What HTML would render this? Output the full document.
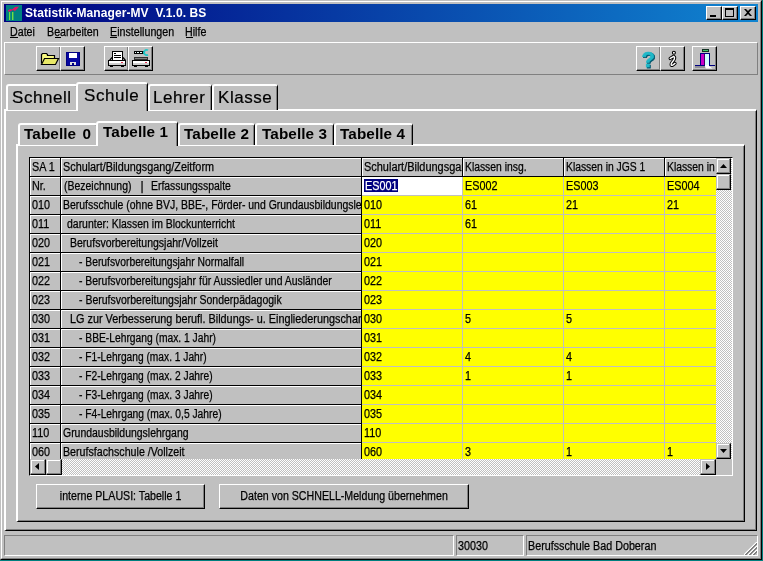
<!DOCTYPE html>
<html>
<head>
<meta charset="utf-8">
<title>Statistik-Manager-MV</title>
<style>
*{box-sizing:border-box;margin:0;padding:0}
html,body{width:763px;height:561px;overflow:hidden;background:#008080}
body{font-family:"Liberation Sans",sans-serif;font-size:11px;color:#000;position:relative;-webkit-font-smoothing:antialiased}
#root{position:absolute;left:0;top:0;width:763px;height:561px;will-change:transform}
.abs{position:absolute}
#win{position:absolute;left:0;top:0;width:762px;height:560px;background:#c0c0c0;
 border:1px solid;border-color:#c0c0c0 #000 #000 #c0c0c0}
#win2{position:absolute;left:0;top:0;width:760px;height:558px;border:1px solid;border-color:#fff #808080 #808080 #fff}
#title{position:absolute;left:4px;top:4px;width:754px;height:18px;
 background:linear-gradient(to right,#000080 0%,#1084d0 100%)}
#title .txt{position:absolute;left:21px;top:1px;color:#fff;font-weight:bold;font-size:12px;line-height:16px;white-space:pre;letter-spacing:0.08px}
.cap{position:absolute;top:2px;width:16px;height:14px;background:#c0c0c0;
 border:1px solid;border-color:#fff #000 #000 #fff;box-shadow:inset -1px -1px 0 #808080}
.menu{position:absolute;top:25px;font-size:11px;line-height:14px;white-space:pre;}
.menu u{text-decoration:none}
.ul{position:absolute;top:37px;height:1px;background:#000}
.menu .t{transform:scaleX(.89)}
#tb{position:absolute;left:4px;top:42px;width:754px;height:33px;border:1px solid;border-color:#fff #808080 #808080 #fff}
.tbtn{position:absolute;top:46px;width:25px;height:25px;background:#c0c0c0;
 border:1px solid;border-color:#fff #000 #000 #fff;box-shadow:inset -1px -1px 0 #808080}
.tab{position:absolute;background:#c0c0c0;border-style:solid;border-width:2px 1px 0 2px;border-color:#fff #000 transparent #fff;
 border-radius:3px 3px 0 0;box-shadow:inset -1px 0 0 #808080;white-space:pre}
.tab1{-webkit-text-stroke:0.2px #000;font-size:17px;line-height:20px;letter-spacing:0.55px}
.on{}
.tab2{font-size:14px;font-weight:bold;line-height:16px}
.tab2 span{transform:scaleX(1.09);transform-origin:0 50%;letter-spacing:0.1px}
.panel{position:absolute;background:#c0c0c0;border-style:solid;border-width:2px 1px 1px 2px;border-color:#fff #000 #000 #fff;
 box-shadow:inset -1px -1px 0 #808080}
#grid{position:absolute;left:29px;top:157px;width:704px;height:319px;background:#c0c0c0;overflow:hidden;
 border:1px solid;border-color:#000 #fff #fff #000}
.row{position:absolute;left:0;height:19px;width:686px}
.c{position:absolute;top:0;height:19px;line-height:18px;white-space:pre;overflow:hidden;font-size:11px}
.f{background:#c0c0c0;border-right:1px solid #000;border-bottom:1px solid #000;box-shadow:inset 1px 1px 0 #fff;padding-left:2.5px}
.y{background:#ff0;border-right:1px solid #c0c0c0;border-bottom:1px solid #c0c0c0;padding-left:1.5px;line-height:18px}
.btn{position:absolute;background:#c0c0c0;border:1px solid;border-color:#fff #000 #000 #fff;
 box-shadow:inset -1px -1px 0 #808080;text-align:center;font-size:11px;line-height:21px;padding-top:1px;white-space:pre}
.btn .t{transform:scaleX(.886)}
.sb{position:absolute;border:1px solid;border-color:#808080 #fff #fff #808080;font-size:11px;line-height:18px;padding:1px 0 0 1px;white-space:pre}
.sb .t{transform:scaleX(.895)}
.dither{background-image:conic-gradient(#fff 25%,#c0c0c0 0 50%,#fff 0 75%,#c0c0c0 0);background-size:2px 2px}
.sbtn{position:absolute;background:#c0c0c0;border:1px solid;border-color:#c0c0c0 #000 #000 #c0c0c0;
 box-shadow:inset -1px -1px 0 #808080, inset 1px 1px 0 #fff}
.sel{background:#000080;color:#fff;position:absolute;left:2px;top:2px;width:34px;height:13px;line-height:14px;padding:0 1px;overflow:hidden}
.sel .t{position:absolute;left:1px;top:0;line-height:14px}
.t{-webkit-text-stroke:0.25px currentColor;display:inline-block;transform:scaleX(.87);transform-origin:0 50%;font-size:12px;white-space:pre}
.tc{transform-origin:50% 50%}
.p{position:absolute;top:0}
</style>
</head>
<body><div id="root">
<div id="win"><div id="win2"></div></div>

<!-- title bar -->
<div id="title">
 <svg class="abs" style="left:2px;top:1px" width="16" height="16" viewBox="0 0 16 16">
  <rect width="16" height="16" fill="#008080"/>
  <path d="M2 5.5L4 4L6 4.5L9 2L13 1.5L11 4L9 6L7 5L4 6.5L2 6.5Z" fill="#e0106a"/>
  <rect x="3" y="7" width="1.2" height="8" fill="#70e040"/>
  <rect x="6" y="7" width="1.4" height="8" fill="#70e040"/>
 </svg>
 <div class="txt">Statistik-Manager-MV  V.1.0. BS</div>
 <div class="cap" style="left:702px"><div class="abs" style="left:3px;top:8px;width:6px;height:2px;background:#000"></div></div>
 <div class="cap" style="left:718px"><div class="abs" style="left:2px;top:1px;width:9px;height:9px;border:1px solid #000;border-top-width:2px"></div></div>
 <div class="cap" style="left:736px"><svg class="abs" style="left:3px;top:2px" width="8" height="7" viewBox="0 0 8 7"><path d="M0 0h2l2 2 2-2h2l-3 3.5 3 3.5h-2l-2-2-2 2h-2l3-3.5z" fill="#000"/></svg></div>
</div>

<!-- menu -->
<div class="menu" style="left:10px"><span class="t"><u>D</u>atei</span></div>
<div class="menu" style="left:47px"><span class="t">B<u>e</u>arbeiten</span></div>
<div class="menu" style="left:110px"><span class="t"><u>E</u>instellungen</span></div>
<div class="menu" style="left:185px"><span class="t"><u>H</u>ilfe</span></div>

<div class="ul" style="left:10px;width:8px"></div><div class="ul" style="left:55px;width:6px"></div><div class="ul" style="left:110px;width:7px"></div><div class="ul" style="left:186px;width:7px"></div>

<!-- toolbar -->
<div id="tb"></div>
<div class="tbtn" style="left:36px"></div>
<div class="tbtn" style="left:60px"></div>
<div class="tbtn" style="left:104px"></div>
<div class="tbtn" style="left:128px"></div>
<div class="tbtn" style="left:636px"></div>
<div class="tbtn" style="left:660px"></div>
<div class="tbtn" style="left:692px"></div>


<!-- toolbar icons -->
<svg class="abs" style="left:0;top:40px" width="763" height="36" viewBox="0 40 763 36">
 <!-- folder -->
 <g stroke="#000" stroke-width="1.2" stroke-linejoin="miter">
  <path d="M41.5 63.5V54.5L42.5 53.5H46.5L47.5 54.5V55.5H54.5V58" fill="#f8f880"/>
  <path d="M41.5 64.5L44.5 58.5H58.5L55.5 64.5Z" fill="#e8e868"/>
 </g>
 <!-- floppy -->
 <g shape-rendering="crispEdges">
  <rect x="66" y="52" width="14" height="14" rx="1" fill="#000080"/>
  <rect x="67" y="53" width="12" height="12" fill="#0808a0"/>
  <rect x="69" y="53" width="8" height="5" fill="#fff"/>
  <rect x="70" y="62" width="6" height="3" fill="#e0e0e0"/>
  <rect x="72" y="63" width="2" height="2" fill="#000080"/>
 </g>
 <!-- printer 1 -->
 <g shape-rendering="crispEdges">
  <rect x="112" y="51" width="11" height="9" fill="#000"/>
  <rect x="113" y="52" width="9" height="8" fill="#fff"/>
  <rect x="114" y="53" width="2" height="1" fill="#000"/>
  <rect x="114" y="55" width="7" height="1" fill="#000"/>
  <rect x="114" y="57" width="7" height="1" fill="#000"/>
  <rect x="108" y="60" width="18" height="6" fill="#000"/>
  <rect x="109" y="61" width="16" height="2" fill="#fff"/>
  <rect x="109" y="63" width="16" height="2" fill="#d0d0d0"/>
  <rect x="121" y="62" width="2" height="1" fill="#e03050"/>
  <rect x="110" y="66" width="3" height="1" fill="#000"/><rect x="121" y="66" width="3" height="1" fill="#000"/>
 </g>
 <path d="M112 57.5L109.5 60.5M123 57.5L125.5 60.5" stroke="#000" stroke-width="1.2"/>
 <!-- printer 2 with wrench -->
 <g shape-rendering="crispEdges">
  <rect x="134" y="51" width="11" height="3" fill="#000"/>
  <rect x="135" y="52" width="9" height="1" fill="#e8ffff"/>
  <rect x="136" y="52" width="1" height="1" fill="#000"/><rect x="139" y="52" width="1" height="1" fill="#000"/><rect x="142" y="52" width="1" height="1" fill="#000"/>
  <rect x="134" y="57" width="14" height="3" fill="#303030"/>
  <rect x="135" y="58" width="12" height="1" fill="#808080"/>
  <rect x="132" y="60" width="18" height="6" fill="#000"/>
  <rect x="133" y="61" width="16" height="2" fill="#fff"/>
  <rect x="133" y="63" width="16" height="2" fill="#d0d0d0"/>
  <rect x="145" y="62" width="2" height="1" fill="#e03050"/>
  <rect x="134" y="66" width="3" height="1" fill="#000"/><rect x="145" y="66" width="3" height="1" fill="#000"/>
 </g>
 <path d="M148 50.3A2.6 2.6 0 1 0 148 54.7" fill="none" stroke="#20c8c8" stroke-width="1.8"/>
 <!-- question mark -->
 <g font-family="Liberation Sans, sans-serif" font-weight="bold" font-size="22">
  <text x="642.6" y="68.2" fill="#005870" stroke="#005870" stroke-width=".8">?</text>
  <text x="641.6" y="67.2" fill="#20b8c8" stroke="#20b8c8" stroke-width=".6">?</text>
 </g>
 <!-- info i -->
 <g fill="none" stroke-linecap="round" stroke-linejoin="round">
  <path id="ip" d="M670.2 58.4L673.8 56.3C675.6 57.6 674 60 672.3 62C670.4 64.4 671 65.9 672.6 65.2L675 63.4" stroke="#000" stroke-width="3.3"/>
  <path d="M670.2 58.4L673.8 56.3C675.6 57.6 674 60 672.3 62C670.4 64.4 671 65.9 672.6 65.2L675 63.4" stroke="#fff" stroke-width="1.4"/>
  <circle cx="673.9" cy="52.8" r="1.5" fill="#fff" stroke="#000" stroke-width="1.1"/>
 </g>
 <!-- door -->
 <g shape-rendering="crispEdges">
  <rect x="702" y="49" width="7" height="3" fill="#103020"/>
  <rect x="703" y="50" width="5" height="1" fill="#40c868"/>
  <rect x="700" y="53" width="10" height="13" fill="#000080"/>
  <rect x="701" y="54" width="3" height="11" fill="#c800c8"/>
  <rect x="704" y="54" width="1" height="11" fill="#400060"/>
  <rect x="705" y="54" width="4" height="12" fill="#d0ffff"/>
  <rect x="695" y="65" width="20" height="1" fill="#000080"/>
  <rect x="695" y="66" width="10" height="2" fill="#909098"/>
  <rect x="705" y="65" width="4" height="1" fill="#fff"/>
 </g>
 <path d="M705 66H709L712.5 68.5H706Z" fill="#fff"/>
</svg>

<!-- outer tab panel -->
<div class="panel" style="left:4px;top:109px;width:753px;height:422px"></div>
<div class="tab tab1" style="left:6px;top:84px;width:72px;height:26px"><span class="abs" style="left:4px;top:2px">Schnell</span></div>
<div class="tab tab1" style="left:148px;top:84px;width:64px;height:26px"><span class="abs" style="left:3px;top:2px">Lehrer</span></div>
<div class="tab tab1" style="left:212px;top:84px;width:66px;height:26px"><span class="abs" style="left:4px;top:2px">Klasse</span></div>
<div class="tab tab1 on" style="left:76px;top:82px;width:72px;height:29px"><span class="abs" style="left:6px;top:2px">Schule</span></div>

<!-- inner tab panel -->
<div class="panel" style="left:16px;top:144px;width:729px;height:378px"></div>
<div class="tab tab2" style="left:18px;top:123px;width:80px;height:22px"><span class="abs" style="left:4px;top:1px">Tabelle<i style="display:inline-block;width:5.7px"></i>0</span></div>
<div class="tab tab2" style="left:178px;top:123px;width:77px;height:22px"><span class="abs" style="left:4px;top:1px">Tabelle 2</span></div>
<div class="tab tab2" style="left:255px;top:123px;width:79px;height:22px"><span class="abs" style="left:5px;top:1px">Tabelle 3</span></div>
<div class="tab tab2" style="left:334px;top:123px;width:79px;height:22px"><span class="abs" style="left:4px;top:1px">Tabelle 4</span></div>
<div class="tab tab2 on" style="left:96px;top:121px;width:82px;height:25px"><span class="abs" style="left:5px;top:1px">Tabelle 1</span></div>

<!-- grid -->
<div id="grid">
<div class="row" style="top:0px">
<div class="c f" style="left:0px;width:31px;padding-left:1.8px"><span class="t" style="transform:scaleX(.9)">SA 1</span></div>
<div class="c f" style="left:31px;width:301px"><span class="t p" style="left:2.0px;transform:scaleX(0.902)">Schulart/Bildungsgang/Zeitform</span></div>
<div class="c f" style="left:332px;width:101px;padding-left:1.5px"><span class="t" style="transform:scaleX(0.912)">Schulart/Bildungsgang/Zeitform</span></div>
<div class="c f" style="left:433px;width:101px;padding-left:1.5px"><span class="t" style="transform:scaleX(0.862)">Klassen insg.</span></div>
<div class="c f" style="left:534px;width:101px;padding-left:1.5px"><span class="t" style="transform:scaleX(0.862)">Klassen in JGS 1</span></div>
<div class="c f" style="left:635px;width:60px;padding-left:1.5px"><span class="t" style="transform:scaleX(0.862)">Klassen in JGS 2</span></div>
</div>
<div class="row" style="top:19px">
<div class="c f" style="left:0px;width:31px;padding-left:1.8px"><span class="t" style="transform:scaleX(.9)">Nr.</span></div>
<div class="c f" style="left:31px;width:301px"><span class="t p" style="left:2.5px;transform:scaleX(0.872)">(Bezeichnung)</span><span class="t p" style="left:79.5px;transform:scaleX(1.000)">|</span><span class="t p" style="left:89.5px;transform:scaleX(0.867)">Erfassungsspalte</span></div>
<div class="c y" style="left:332px;width:101px;background:#fff"><span class="sel"><span class="t" style="transform:scaleX(.9)">ES001</span></span></div>
<div class="c y" style="left:433px;width:101px"><span class="t" style="transform:scaleX(.9)">ES002</span></div>
<div class="c y" style="left:534px;width:101px"><span class="t" style="transform:scaleX(.9)">ES003</span></div>
<div class="c y" style="left:635px;width:60px"><span class="t" style="transform:scaleX(.9)">ES004</span></div>
</div>
<div class="row" style="top:38px">
<div class="c f" style="left:0px;width:31px;padding-left:1.8px"><span class="t" style="transform:scaleX(.9)">010</span></div>
<div class="c f" style="left:31px;width:301px"><span class="t p" style="left:2.0px;transform:scaleX(0.871)">Berufsschule (ohne BVJ, BBE-, Förder- und Grundausbildungslehrgang)</span></div>
<div class="c y" style="left:332px;width:101px"><span class="t" style="transform:scaleX(.9)">010</span></div>
<div class="c y" style="left:433px;width:101px"><span class="t" style="transform:scaleX(.9)">61</span></div>
<div class="c y" style="left:534px;width:101px"><span class="t" style="transform:scaleX(.9)">21</span></div>
<div class="c y" style="left:635px;width:60px"><span class="t" style="transform:scaleX(.9)">21</span></div>
</div>
<div class="row" style="top:57px">
<div class="c f" style="left:0px;width:31px;padding-left:1.8px"><span class="t" style="transform:scaleX(.9)">011</span></div>
<div class="c f" style="left:31px;width:301px"><span class="t p" style="left:5.5px;transform:scaleX(0.871)">darunter: Klassen im Blockunterricht</span></div>
<div class="c y" style="left:332px;width:101px"><span class="t" style="transform:scaleX(.9)">011</span></div>
<div class="c y" style="left:433px;width:101px"><span class="t" style="transform:scaleX(.9)">61</span></div>
<div class="c y" style="left:534px;width:101px"><span class="t" style="transform:scaleX(.9)"></span></div>
<div class="c y" style="left:635px;width:60px"><span class="t" style="transform:scaleX(.9)"></span></div>
</div>
<div class="row" style="top:76px">
<div class="c f" style="left:0px;width:31px;padding-left:1.8px"><span class="t" style="transform:scaleX(.9)">020</span></div>
<div class="c f" style="left:31px;width:301px"><span class="t p" style="left:8.5px;transform:scaleX(0.876)">Berufsvorbereitungsjahr/Vollzeit</span></div>
<div class="c y" style="left:332px;width:101px"><span class="t" style="transform:scaleX(.9)">020</span></div>
<div class="c y" style="left:433px;width:101px"><span class="t" style="transform:scaleX(.9)"></span></div>
<div class="c y" style="left:534px;width:101px"><span class="t" style="transform:scaleX(.9)"></span></div>
<div class="c y" style="left:635px;width:60px"><span class="t" style="transform:scaleX(.9)"></span></div>
</div>
<div class="row" style="top:95px">
<div class="c f" style="left:0px;width:31px;padding-left:1.8px"><span class="t" style="transform:scaleX(.9)">021</span></div>
<div class="c f" style="left:31px;width:301px"><span class="t p" style="left:17.5px;transform:scaleX(0.859)">- Berufsvorbereitungsjahr Normalfall</span></div>
<div class="c y" style="left:332px;width:101px"><span class="t" style="transform:scaleX(.9)">021</span></div>
<div class="c y" style="left:433px;width:101px"><span class="t" style="transform:scaleX(.9)"></span></div>
<div class="c y" style="left:534px;width:101px"><span class="t" style="transform:scaleX(.9)"></span></div>
<div class="c y" style="left:635px;width:60px"><span class="t" style="transform:scaleX(.9)"></span></div>
</div>
<div class="row" style="top:114px">
<div class="c f" style="left:0px;width:31px;padding-left:1.8px"><span class="t" style="transform:scaleX(.9)">022</span></div>
<div class="c f" style="left:31px;width:301px"><span class="t p" style="left:17.5px;transform:scaleX(0.869)">- Berufsvorbereitungsjahr für Aussiedler und Ausländer</span></div>
<div class="c y" style="left:332px;width:101px"><span class="t" style="transform:scaleX(.9)">022</span></div>
<div class="c y" style="left:433px;width:101px"><span class="t" style="transform:scaleX(.9)"></span></div>
<div class="c y" style="left:534px;width:101px"><span class="t" style="transform:scaleX(.9)"></span></div>
<div class="c y" style="left:635px;width:60px"><span class="t" style="transform:scaleX(.9)"></span></div>
</div>
<div class="row" style="top:133px">
<div class="c f" style="left:0px;width:31px;padding-left:1.8px"><span class="t" style="transform:scaleX(.9)">023</span></div>
<div class="c f" style="left:31px;width:301px"><span class="t p" style="left:17.5px;transform:scaleX(0.873)">- Berufsvorbereitungsjahr Sonderpädagogik</span></div>
<div class="c y" style="left:332px;width:101px"><span class="t" style="transform:scaleX(.9)">023</span></div>
<div class="c y" style="left:433px;width:101px"><span class="t" style="transform:scaleX(.9)"></span></div>
<div class="c y" style="left:534px;width:101px"><span class="t" style="transform:scaleX(.9)"></span></div>
<div class="c y" style="left:635px;width:60px"><span class="t" style="transform:scaleX(.9)"></span></div>
</div>
<div class="row" style="top:152px">
<div class="c f" style="left:0px;width:31px;padding-left:1.8px"><span class="t" style="transform:scaleX(.9)">030</span></div>
<div class="c f" style="left:31px;width:301px"><span class="t p" style="left:8.5px;transform:scaleX(0.903)">LG zur Verbesserung berufl. Bildungs- u. Eingliederungschancen</span></div>
<div class="c y" style="left:332px;width:101px"><span class="t" style="transform:scaleX(.9)">030</span></div>
<div class="c y" style="left:433px;width:101px"><span class="t" style="transform:scaleX(.9)">5</span></div>
<div class="c y" style="left:534px;width:101px"><span class="t" style="transform:scaleX(.9)">5</span></div>
<div class="c y" style="left:635px;width:60px"><span class="t" style="transform:scaleX(.9)"></span></div>
</div>
<div class="row" style="top:171px">
<div class="c f" style="left:0px;width:31px;padding-left:1.8px"><span class="t" style="transform:scaleX(.9)">031</span></div>
<div class="c f" style="left:31px;width:301px"><span class="t p" style="left:17.5px;transform:scaleX(0.856)">- BBE-Lehrgang (max. 1 Jahr)</span></div>
<div class="c y" style="left:332px;width:101px"><span class="t" style="transform:scaleX(.9)">031</span></div>
<div class="c y" style="left:433px;width:101px"><span class="t" style="transform:scaleX(.9)"></span></div>
<div class="c y" style="left:534px;width:101px"><span class="t" style="transform:scaleX(.9)"></span></div>
<div class="c y" style="left:635px;width:60px"><span class="t" style="transform:scaleX(.9)"></span></div>
</div>
<div class="row" style="top:190px">
<div class="c f" style="left:0px;width:31px;padding-left:1.8px"><span class="t" style="transform:scaleX(.9)">032</span></div>
<div class="c f" style="left:31px;width:301px"><span class="t p" style="left:17.5px;transform:scaleX(0.850)">- F1-Lehrgang (max. 1 Jahr)</span></div>
<div class="c y" style="left:332px;width:101px"><span class="t" style="transform:scaleX(.9)">032</span></div>
<div class="c y" style="left:433px;width:101px"><span class="t" style="transform:scaleX(.9)">4</span></div>
<div class="c y" style="left:534px;width:101px"><span class="t" style="transform:scaleX(.9)">4</span></div>
<div class="c y" style="left:635px;width:60px"><span class="t" style="transform:scaleX(.9)"></span></div>
</div>
<div class="row" style="top:209px">
<div class="c f" style="left:0px;width:31px;padding-left:1.8px"><span class="t" style="transform:scaleX(.9)">033</span></div>
<div class="c f" style="left:31px;width:301px"><span class="t p" style="left:17.5px;transform:scaleX(0.852)">- F2-Lehrgang (max. 2 Jahre)</span></div>
<div class="c y" style="left:332px;width:101px"><span class="t" style="transform:scaleX(.9)">033</span></div>
<div class="c y" style="left:433px;width:101px"><span class="t" style="transform:scaleX(.9)">1</span></div>
<div class="c y" style="left:534px;width:101px"><span class="t" style="transform:scaleX(.9)">1</span></div>
<div class="c y" style="left:635px;width:60px"><span class="t" style="transform:scaleX(.9)"></span></div>
</div>
<div class="row" style="top:228px">
<div class="c f" style="left:0px;width:31px;padding-left:1.8px"><span class="t" style="transform:scaleX(.9)">034</span></div>
<div class="c f" style="left:31px;width:301px"><span class="t p" style="left:17.5px;transform:scaleX(0.852)">- F3-Lehrgang (max. 3 Jahre)</span></div>
<div class="c y" style="left:332px;width:101px"><span class="t" style="transform:scaleX(.9)">034</span></div>
<div class="c y" style="left:433px;width:101px"><span class="t" style="transform:scaleX(.9)"></span></div>
<div class="c y" style="left:534px;width:101px"><span class="t" style="transform:scaleX(.9)"></span></div>
<div class="c y" style="left:635px;width:60px"><span class="t" style="transform:scaleX(.9)"></span></div>
</div>
<div class="row" style="top:247px">
<div class="c f" style="left:0px;width:31px;padding-left:1.8px"><span class="t" style="transform:scaleX(.9)">035</span></div>
<div class="c f" style="left:31px;width:301px"><span class="t p" style="left:17.5px;transform:scaleX(0.855)">- F4-Lehrgang (max. 0,5 Jahre)</span></div>
<div class="c y" style="left:332px;width:101px"><span class="t" style="transform:scaleX(.9)">035</span></div>
<div class="c y" style="left:433px;width:101px"><span class="t" style="transform:scaleX(.9)"></span></div>
<div class="c y" style="left:534px;width:101px"><span class="t" style="transform:scaleX(.9)"></span></div>
<div class="c y" style="left:635px;width:60px"><span class="t" style="transform:scaleX(.9)"></span></div>
</div>
<div class="row" style="top:266px">
<div class="c f" style="left:0px;width:31px;padding-left:1.8px"><span class="t" style="transform:scaleX(.9)">110</span></div>
<div class="c f" style="left:31px;width:301px"><span class="t p" style="left:2.0px;transform:scaleX(0.871)">Grundausbildungslehrgang</span></div>
<div class="c y" style="left:332px;width:101px"><span class="t" style="transform:scaleX(.9)">110</span></div>
<div class="c y" style="left:433px;width:101px"><span class="t" style="transform:scaleX(.9)"></span></div>
<div class="c y" style="left:534px;width:101px"><span class="t" style="transform:scaleX(.9)"></span></div>
<div class="c y" style="left:635px;width:60px"><span class="t" style="transform:scaleX(.9)"></span></div>
</div>
<div class="row" style="top:285px">
<div class="c f" style="left:0px;width:31px;padding-left:1.8px"><span class="t" style="transform:scaleX(.9)">060</span></div>
<div class="c f" style="left:31px;width:301px"><span class="t p" style="left:2.0px;transform:scaleX(0.889)">Berufsfachschule /Vollzeit</span></div>
<div class="c y" style="left:332px;width:101px"><span class="t" style="transform:scaleX(.9)">060</span></div>
<div class="c y" style="left:433px;width:101px"><span class="t" style="transform:scaleX(.9)">3</span></div>
<div class="c y" style="left:534px;width:101px"><span class="t" style="transform:scaleX(.9)">1</span></div>
<div class="c y" style="left:635px;width:60px"><span class="t" style="transform:scaleX(.9)">1</span></div>
</div>
<div class="abs dither" style="left:686px;top:0;width:16px;height:301px"></div>
<div class="sbtn" style="left:686px;top:0;width:15px;height:16px"><svg class="abs" style="left:3px;top:5px" width="7" height="4"><path d="M3.5 0L7 4H0z" fill="#000"/></svg></div>
<div class="sbtn" style="left:686px;top:16px;width:15px;height:16px"></div>
<div class="sbtn" style="left:686px;top:285px;width:15px;height:16px"><svg class="abs" style="left:3px;top:5px" width="7" height="4"><path d="M0 0H7L3.5 4z" fill="#000"/></svg></div>
<div class="abs dither" style="left:0;top:301px;width:686px;height:16px"></div>
<div class="sbtn" style="left:0;top:301px;width:16px;height:16px"><svg class="abs" style="left:4px;top:3px" width="4" height="7"><path d="M4 0V7L0 3.5z" fill="#000"/></svg></div>
<div class="sbtn" style="left:16px;top:301px;width:16px;height:16px"></div>
<div class="sbtn" style="left:670px;top:301px;width:16px;height:16px"><svg class="abs" style="left:5px;top:3px" width="4" height="7"><path d="M0 0V7L4 3.5z" fill="#000"/></svg></div>
<div class="abs" style="left:686px;top:301px;width:16px;height:16px;background:#c0c0c0"></div>
</div>

<!-- buttons -->
<div class="btn" style="left:36px;top:484px;width:169px;height:25px"><span class="t tc">interne PLAUSI: Tabelle 1</span></div>
<div class="btn" style="left:219px;top:484px;width:250px;height:25px"><span class="t tc">Daten von SCHNELL-Meldung übernehmen</span></div>

<!-- status bar -->
<div class="sb" style="left:4px;top:535px;width:450px;height:21px"></div>
<div class="sb" style="left:456px;top:535px;width:68px;height:21px"><span class="t">30030</span></div>
<div class="sb" style="left:526px;top:535px;width:232px;height:21px"><span class="t">Berufsschule Bad Doberan</span></div>
<svg class="abs" style="left:744px;top:542px" width="13" height="13" viewBox="0 0 13 13">
 <path d="M0 13L13 0M4 13L13 4M8 13L13 8" stroke="#fff" stroke-width="1.4"/>
 <path d="M1 13L13 1M2 13L13 2M5 13L13 5M6 13L13 6M9 13L13 9M10 13L13 10" stroke="#808080" stroke-width="1"/>
</svg>

</div></body>
</html>
